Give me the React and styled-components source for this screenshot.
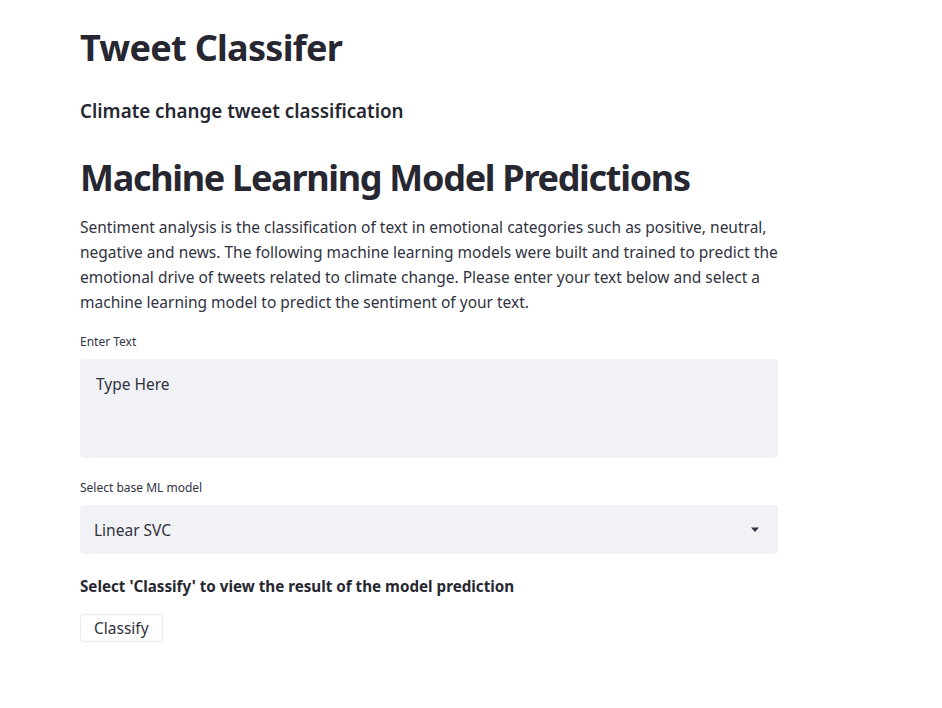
import React from 'react';
import styled, { createGlobalStyle } from 'styled-components';

const GlobalStyle = createGlobalStyle`
  body {
    margin: 0;
    background: #ffffff;
    font-family: "Noto Sans", "Open Sans", sans-serif;
    color: #31333f;
  }
`;

const Main = styled.main`
  width: 698px;
  padding: 24px 0 40px 80px;
  display: flex;
  flex-direction: column;
`;

const Title = styled.h1`
  margin: ${(p) => p.$top || 0}px 0 0;
  font-size: 36px;
  line-height: 48px;
  font-weight: 700;
  color: #262730;
  letter-spacing: ${(p) => p.$tight || -0.7}px;
`;

const Subtitle = styled.h3`
  margin: 26px 0 0;
  font-size: 18.8px;
  line-height: 26px;
  font-weight: 600;
  color: #262730;
`;

const Text = styled.p`
  margin: 13px 0 0;
  font-size: 15.5px;
  line-height: 25px;
  color: #31333f;
`;

const Label = styled.label`
  display: block;
  margin-top: ${(p) => p.$top}px;
  font-size: 12px;
  line-height: 16px;
  color: #31333f;
`;

const Field = styled.div`
  margin-top: 9px;
  background: #f0f2f6;
  border-radius: 4px;
  box-sizing: border-box;
`;

const TextArea = styled.textarea`
  display: block;
  width: 100%;
  height: 99px;
  box-sizing: border-box;
  border: none;
  outline: none;
  resize: none;
  background: transparent;
  padding: 15px 16px;
  font-family: inherit;
  font-size: 15.5px;
  line-height: 20px;
  color: #31333f;
  &::placeholder {
    color: #31333f;
  }
`;

const Select = styled.div`
  height: 49px;
  display: flex;
  align-items: center;
  justify-content: space-between;
  padding: 0 18px 0 14px;
  font-size: 15.5px;
  color: #31333f;
`;

const Strong = styled.div`
  margin-top: 20px;
  font-size: 15.2px;
  line-height: 24px;
  font-weight: 700;
  color: #262730;
`;

const Button = styled.button`
  align-self: flex-start;
  margin-top: 16px;
  height: 28px;
  padding: 0 13px;
  background: #ffffff;
  border: 1px solid #e6eaf1;
  border-radius: 4px;
  font-family: inherit;
  font-size: 15.5px;
  color: #31333f;
`;

export default function App() {
  return (
    <>
      <GlobalStyle />
      <Main>
        <Title>Tweet Classifer</Title>
        <Subtitle>Climate change tweet classification</Subtitle>
        <Title $top={30} $tight={-1.3}>Machine Learning Model Predictions</Title>
        <Text>
          Sentiment analysis is the classification of text in emotional categories such as positive, neutral,
          negative and news. The following machine learning models were built and trained to predict the
          emotional drive of tweets related to climate change. Please enter your text below and select a
          machine learning model to predict the sentiment of your text.
        </Text>
        <Label $top={19}>Enter Text</Label>
        <Field>
          <TextArea placeholder="Type Here" />
        </Field>
        <Label $top={22}>Select base ML model</Label>
        <Field>
          <Select>
            <span>Linear SVC</span>
            <svg width="10" height="6" viewBox="0 0 10 6">
              <path d="M1 0.5h8L5 5z" fill="#31333f" />
            </svg>
          </Select>
        </Field>
        <Strong>Select 'Classify' to view the result of the model prediction</Strong>
        <Button>Classify</Button>
      </Main>
    </>
  );
}
